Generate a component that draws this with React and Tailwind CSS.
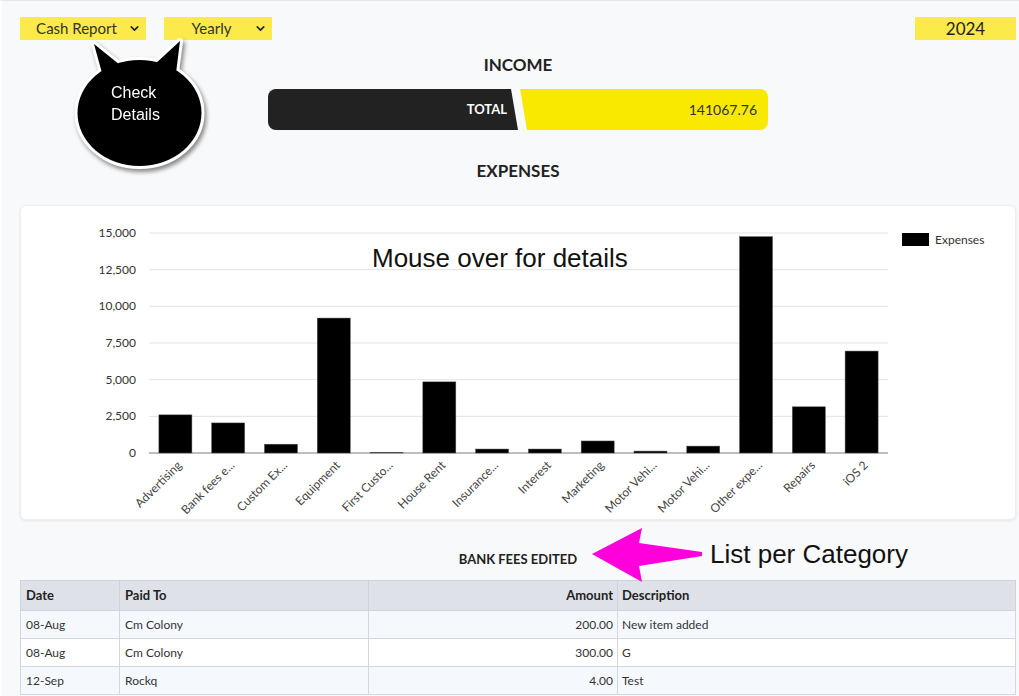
import { ChevronDown } from 'lucide-react';

const expenses = [
  { label: 'Advertising', value: 2600 },
  { label: 'Bank fees e...', value: 2050 },
  { label: 'Custom Ex...', value: 600 },
  { label: 'Equipment', value: 9200 },
  { label: 'First Custo...', value: 50 },
  { label: 'House Rent', value: 4850 },
  { label: 'Insurance...', value: 270 },
  { label: 'Interest', value: 270 },
  { label: 'Marketing', value: 820 },
  { label: 'Motor Vehi...', value: 130 },
  { label: 'Motor Vehi...', value: 470 },
  { label: 'Other expe...', value: 14750 },
  { label: 'Repairs', value: 3150 },
  { label: 'iOS 2', value: 6950 },
];

const rows = [
  { date: '08-Aug', paidTo: 'Cm Colony', amount: '200.00', desc: 'New item added' },
  { date: '08-Aug', paidTo: 'Cm Colony', amount: '300.00', desc: 'G' },
  { date: '12-Sep', paidTo: 'Rockq', amount: '4.00', desc: 'Test' },
];

function Select({ label, className }) {
  return (
    <div className={`relative h-[23px] bg-[#fce94a] flex items-center justify-center pr-[13px] text-[15px] text-[#333] ${className}`}>
      {label}
      <ChevronDown size={13} strokeWidth={3} color="#222" className="absolute right-[5px] top-[5px]" />
    </div>
  );
}

function ExpenseChart() {
  const left = 128;
  const right = 867;
  const top = 27;
  const bottom = 247;
  const max = 15000;
  const band = (right - left) / expenses.length;
  const ticks = [15000, 12500, 10000, 7500, 5000, 2500, 0];
  const y = (v) => bottom - (v / max) * (bottom - top);

  return (
    <svg width="996" height="315" className="block">
      {ticks.map((t) => (
        <g key={t}>
          <line x1={left} x2={right} y1={y(t)} y2={y(t)} stroke={t === 0 ? '#a8a8a8' : '#e3e3e3'} strokeWidth={t === 0 ? 1.5 : 1} />
          <text x="115" y={y(t) + 4} textAnchor="end" fontSize="12" fill="#333" fontFamily="Lato, sans-serif">
            {t.toLocaleString('en-US')}
          </text>
        </g>
      ))}
      {expenses.map((e, i) => {
        const cx = left + band * i + band / 2;
        return (
          <g key={i}>
            <rect x={cx - 16.5} y={y(e.value)} width="33" height={bottom - y(e.value)} fill="#000" stroke="#555" strokeWidth="0.5" />
            <text
              transform={`translate(${cx + 7} 260) rotate(-45)`}
              textAnchor="end"
              fontSize="12"
              fill="#444"
              fontFamily="Lato, sans-serif"
            >
              {e.label}
            </text>
          </g>
        );
      })}
      <rect x="881" y="27" width="27" height="13" fill="#000" />
      <text x="914" y="38" fontSize="12" fill="#333" fontFamily="Lato, sans-serif">Expenses</text>
    </svg>
  );
}

function Bubble() {
  return (
    <svg width="160" height="150" className="absolute left-[60px] top-[30px] drop-shadow-[2px_3px_2px_rgba(0,0,0,0.45)]">
      <g fill="#fff" stroke="#fff" strokeWidth="6" strokeLinejoin="round">
        <ellipse cx="77.5" cy="82" rx="62" ry="53" />
        <polygon points="32,13 40,42 58,34" />
        <polygon points="118,10 92,34 114,42" />
      </g>
      <g fill="#000">
        <ellipse cx="77.5" cy="82" rx="62" ry="53" />
        <polygon points="32,13 40,42 58,34" />
        <polygon points="118,10 92,34 114,42" />
      </g>
      <text x="49" y="67" fontSize="16" fill="#fff" fontFamily="Liberation Sans, Arial, sans-serif">Check</text>
      <text x="49" y="89" fontSize="16" fill="#fff" fontFamily="Liberation Sans, Arial, sans-serif">Details</text>
    </svg>
  );
}

export default function App() {
  return (
    <div className="relative min-h-screen bg-[#f8f9fb] border-t border-[#e3e6ea] border-l-2 border-l-white pl-[18px] pr-[3px] font-[Lato,sans-serif] text-[#222] overflow-hidden">
      <div className="flex items-start justify-between pt-4">
        <div className="flex gap-[18px]">
          <Select label="Cash Report" className="w-[126px]" />
          <Select label="Yearly" className="w-[108px]" />
        </div>
        <div className="w-[101px] h-[23px] bg-[#fce94a] flex items-center justify-center text-[17px] text-[#222]">2024</div>
      </div>

      <h2 className="mt-[13px] text-center text-[17px] leading-6 font-bold">INCOME</h2>

      <div className="mt-3 mx-auto w-[500px] h-[41px] flex rounded-lg overflow-hidden">
        <div className="w-[250px] bg-[#222] [clip-path:polygon(0_0,243px_0,250px_100%,0_100%)] flex items-center justify-end pr-[11px] text-white text-[13px] font-bold">
          TOTAL
        </div>
        <div className="flex-1 bg-[#f9e900] [clip-path:polygon(2px_0,100%_0,100%_100%,9px_100%)] flex items-center justify-end pr-[11px] text-[14px] text-[#333]">
          141067.76
        </div>
      </div>

      <h2 className="mt-[29px] text-center text-[17px] leading-6 font-bold">EXPENSES</h2>

      <div className="relative mt-[22px] h-[315px] bg-white rounded-md border border-[#eceef1] shadow-[0_1px_3px_rgba(0,0,0,0.08)] overflow-hidden">
        <ExpenseChart />
        <div className="absolute left-[351px] top-[37px] text-[26px] leading-[30px] text-[#111] font-['Liberation_Sans',Arial,sans-serif]">
          Mouse over for details
        </div>
      </div>

      <h3 className="mt-[29px] text-center text-[13px] leading-5 font-bold">BANK FEES EDITED</h3>

      <table className="mt-[11px] w-full border-collapse text-[12px] text-[#333]">
        <thead>
          <tr className="bg-[#dee2e8] h-[30px] text-[13px] text-[#222]">
            <th className="w-[99px] border border-[#cfd3d8] px-[5px] text-left font-bold">Date</th>
            <th className="w-[249px] border border-[#cfd3d8] px-[5px] text-left font-bold">Paid To</th>
            <th className="w-[249px] border border-[#cfd3d8] px-[4px] text-right font-bold">Amount</th>
            <th className="border border-[#cfd3d8] px-[4px] text-left font-bold">Description</th>
          </tr>
        </thead>
        <tbody>
          {rows.map((r, i) => (
            <tr key={i} className={`h-[28px] ${i % 2 === 0 ? 'bg-[#f5f9fd]' : 'bg-white'}`}>
              <td className="border border-[#d4d7db] px-[5px]">{r.date}</td>
              <td className="border border-[#d4d7db] px-[5px]">{r.paidTo}</td>
              <td className="border border-[#d4d7db] px-[4px] text-right">{r.amount}</td>
              <td className="border border-[#d4d7db] px-[4px]">{r.desc}</td>
            </tr>
          ))}
        </tbody>
      </table>

      <Bubble />

      <svg width="112" height="56" className="absolute left-[589px] top-[526px]">
        <polygon points="1,27 51,1 48,16 111,25 111,29 48,39 51,55" fill="#ff00dc" />
      </svg>
      <div className="absolute left-[708px] top-[538px] text-[26px] leading-[30px] text-[#111] font-['Liberation_Sans',Arial,sans-serif]">
        List per Category
      </div>
    </div>
  );
}
